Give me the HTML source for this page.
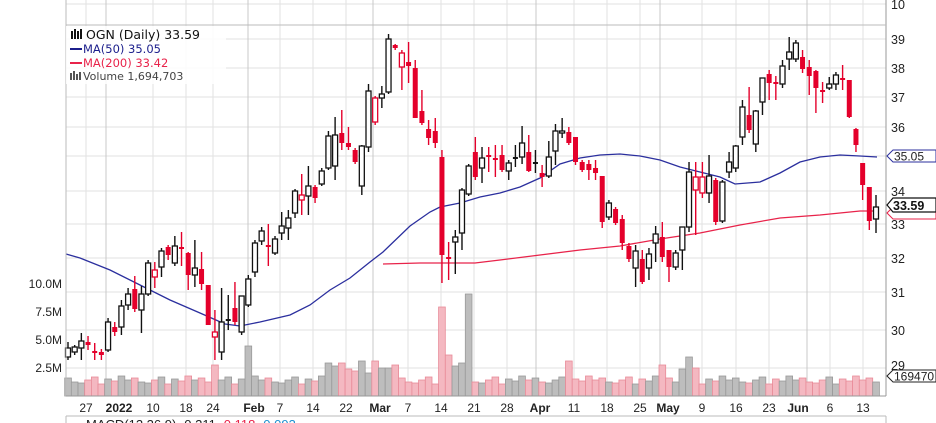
<!DOCTYPE html>
<html><head><meta charset="utf-8"><style>
body{margin:0;background:#fff;width:936px;height:423px;overflow:hidden;font-family:"Liberation Sans",Arial,sans-serif}
svg{position:absolute;left:0;top:0}
</style></head><body>
<svg id="s" width="936" height="423" xmlns="http://www.w3.org/2000/svg" font-family="Liberation Sans, Arial, sans-serif">
<g id="grid"></g>
<g id="vol"></g>
<polyline fill="none" stroke="#2b2f9e" stroke-width="1.3" points="66,254 80,258 110,270 140,285 170,300 200,313 225,324 240,326 260,322 290,315 310,305 330,290 350,278 370,262 383,252 410,226 430,212 440,207 460,203 480,197 500,193 520,187 540,178 560,164 580,158 600,155 620,154 640,156 660,160 680,167 700,172 720,177 735,184 760,182 780,173 800,162 820,157 840,155 860,156 877,157"/>
<polyline fill="none" stroke="#e8234a" stroke-width="1.3" points="383,264 420,263 440,263 475,263 500,260 540,255 580,250 620,246 660,239 700,233 740,225 780,218 820,215 860,211 877,211"/>
<g id="c"></g>
<line x1="886" y1="0" x2="886" y2="396" stroke="#999"/>
<line x1="66" y1="25" x2="886" y2="25" stroke="#bbb"/>
<line x1="66" y1="0" x2="66" y2="396" stroke="#bbb"/>
<line x1="66" y1="396" x2="886" y2="396" stroke="#999"/>
<g font-size="12.5" fill="#222">
<text x="891" y="9">10</text>
<text x="891" y="44">39</text>
<text x="891" y="73">38</text>
<text x="891" y="102">37</text>
<text x="891" y="132">36</text>
<text x="891" y="196">34</text>
<text x="891" y="229">33</text>
<text x="891" y="263">32</text>
<text x="891" y="297">31</text>
<text x="891" y="335">30</text>
<text x="891" y="370">29</text>
</g>
<g font-size="12" fill="#222" text-anchor="end">
<text x="62" y="288">10.0M</text>
<text x="62" y="316">7.5M</text>
<text x="62" y="344">5.0M</text>
<text x="62" y="372">2.5M</text>
</g>
<path d="M887,156 L893,150 L936,150 L936,162 L893,162 Z" fill="#fff" stroke="#2b2f9e"/>
<text x="894" y="160.5" font-size="12" fill="#222">35.05</text>
<path d="M887,213 L893,207 L936,207 L936,219 L893,219 Z" fill="#fff" stroke="#e8234a"/>
<path d="M887,205 L893,198 L936,198 L936,212 L893,212 Z" fill="#fff" stroke="#111" stroke-width="1.2"/>
<text x="893" y="210" font-size="12.5" font-weight="bold" fill="#111">33.59</text>
<path d="M887,376 L893,370 L936,370 L936,382 L893,382 Z" fill="#fff" stroke="#222"/>
<text x="894" y="380.5" font-size="12" fill="#222">169470</text>
<g font-size="12" fill="#222" text-anchor="middle">
<text x="86" y="412">27</text>
<text x="119" y="412" font-weight="bold">2022</text>
<text x="153" y="412">10</text>
<text x="186" y="412">18</text>
<text x="213" y="412">24</text>
<text x="254" y="412" font-weight="bold">Feb</text>
<text x="280" y="412">7</text>
<text x="313" y="412">14</text>
<text x="346" y="412">22</text>
<text x="380" y="412" font-weight="bold">Mar</text>
<text x="408" y="412">7</text>
<text x="441" y="412">14</text>
<text x="474" y="412">21</text>
<text x="507" y="412">28</text>
<text x="540" y="412" font-weight="bold">Apr</text>
<text x="574" y="412">11</text>
<text x="607" y="412">18</text>
<text x="640" y="412">25</text>
<text x="668" y="412" font-weight="bold">May</text>
<text x="702" y="412">9</text>
<text x="736" y="412">16</text>
<text x="769" y="412">23</text>
<text x="798" y="412" font-weight="bold">Jun</text>
<text x="830" y="412">6</text>
<text x="863" y="412">13</text>
</g>
<line x1="66" y1="416" x2="886" y2="416" stroke="#bbb"/>
<line x1="66" y1="416" x2="66" y2="423" stroke="#bbb"/>
<line x1="886" y1="416" x2="886" y2="423" stroke="#bbb"/>
<text x="86" y="429" font-size="13" fill="#222">MACD(12,26,9) -0.211 <tspan fill="#e8234a">-0.118</tspan> <tspan fill="#1e90d0">-0.093</tspan></text>
<rect x="66" y="26" width="160" height="58" fill="#fff" opacity="0.85"/>
<g font-family="DejaVu Sans, Verdana, sans-serif">
<rect x="71" y="31" width="2" height="8" fill="#111"/><rect x="74" y="29" width="2" height="10" fill="#111"/><rect x="77" y="31" width="2" height="8" fill="#111"/><rect x="80" y="29" width="2" height="10" fill="#111"/>
<text x="86" y="39" fill="#111" font-size="12.5">OGN (Daily) 33.59</text>
<line x1="70" y1="49" x2="82" y2="49" stroke="#1c1f8c" stroke-width="2"/>
<text x="83" y="53" fill="#1c1f8c" font-size="11.5">MA(50) 35.05</text>
<line x1="70" y1="63" x2="82" y2="63" stroke="#e8234a" stroke-width="2"/>
<text x="83" y="67" fill="#e8234a" font-size="11.5">MA(200) 33.42</text>
<rect x="70" y="73" width="2" height="7" fill="#555"/><rect x="73" y="71" width="2" height="9" fill="#555"/><rect x="76" y="74" width="2" height="6" fill="#555"/><rect x="79" y="72" width="2" height="8" fill="#555"/>
<text x="83" y="80" fill="#444" font-size="11">Volume 1,694,703</text>
</g>
</svg>
<script>
var NS="http://www.w3.org/2000/svg";
function el(p,t,a){var e=document.createElementNS(NS,t);for(var k in a)e.setAttribute(k,a[k]);p.appendChild(e);return e;}
var g=document.getElementById('grid');
[4,39,68,97,127,156,191,224,258,292,330,368].forEach(function(y){el(g,'line',{x1:66,y1:y,x2:886,y2:y,stroke:'#e2e2e2'});});
[86,153,186,213,280,313,346,408,441,474,507,574,607,640,702,736,769,830,863].forEach(function(x){el(g,'line',{x1:x,y1:0,x2:x,y2:396,stroke:'#e2e2e2'});});
[106,248,373,536,660,807].forEach(function(x){el(g,'line',{x1:x,y1:0,x2:x,y2:396,stroke:'#c8c8c8'});});
var C=[
[348,357,342,360,'h'],[347,352,345,355,'h'],[341,348,333,360,'h'],[342,345,336,350,'r'],[351,353,343,360,'r'],[352,355,349,360,'r'],
[322,350,318,352,'h'],[327,332,322,336,'r'],[306,327,300,335,'h'],[294,305,288,310,'h'],[289,309,276,312,'r'],[294,310,286,333,'h'],
[263,294,260,296,'h'],[270,277,262,288,'rh'],[251,267,248,277,'h'],[247,255,245,260,'r'],[246,263,236,266,'h'],[247,248,232,266,'r'],
[253,275,252,290,'r'],[268,275,240,287,'h'],[269,284,252,290,'r'],[285,325,285,325,'r'],[332,337,310,360,'rh'],[322,352,288,360,'h'],
[319,321,295,330,'d'],[308,322,282,325,'r'],[296,332,315,335,'h'],[279,305,275,307,'h'],[243,272,240,277,'h'],[231,241,227,245,'h'],
[245,247,224,266,'r'],[239,253,236,255,'h'],[226,233,212,240,'h'],[218,228,210,240,'h'],[191,213,189,218,'h'],[195,200,174,215,'rh'],
[186,196,166,215,'h'],[187,198,185,203,'r'],[171,184,168,186,'h'],[136,168,131,170,'h'],[135,166,117,180,'h'],[133,143,110,150,'r'],
[143,147,127,150,'r'],[150,162,148,164,'r'],[146,186,145,195,'h'],[91,147,84,152,'h'],[98,122,96,125,'rh'],[94,98,86,108,'h'],
[39,92,34,94,'h'],[45,48,44,50,'r'],[53,67,50,90,'rh'],[62,66,42,83,'r'],[68,118,60,118,'r'],[111,123,90,125,'r'],
[129,138,120,145,'r'],[131,143,118,148,'r'],[157,255,150,283,'r'],[257,259,242,280,'r'],[237,242,230,274,'h'],[190,233,188,250,'h'],
[166,194,164,196,'h'],[152,177,137,180,'r'],[158,168,147,183,'h'],[155,157,147,172,'r'],[158,160,145,177,'r'],[155,170,145,172,'r'],
[163,171,160,180,'h'],[157,159,145,167,'d'],[143,157,126,164,'h'],[152,171,135,172,'r'],[162,164,150,173,'d'],[173,177,165,187,'r'],
[157,176,141,178,'h'],[131,151,124,165,'h'],[131,133,118,138,'h'],[132,143,127,145,'r'],[137,162,137,165,'r'],[162,170,160,172,'r'],
[164,170,160,180,'r'],[168,173,160,180,'r'],[176,222,176,228,'r'],[203,217,200,220,'h'],[209,223,207,225,'r'],[219,243,215,250,'r'],
[246,259,243,262,'r'],[251,268,245,287,'h'],[259,282,250,284,'r'],[254,268,248,280,'h'],[234,243,226,262,'h'],[237,257,222,262,'r'],
[250,267,250,282,'r'],[253,267,250,270,'h'],[227,250,227,270,'h'],[172,227,162,232,'h'],[177,190,162,235,'rh'],[177,193,162,198,'rh'],
[176,193,155,203,'h'],[180,222,178,225,'r'],[182,221,180,223,'h'],[162,172,152,178,'h'],[146,168,145,172,'h'],[107,137,100,145,'h'],
[115,130,87,133,'r'],[111,144,110,152,'h'],[78,102,78,115,'h'],[74,83,70,100,'r'],[82,84,76,100,'r'],[66,84,60,88,'h'],
[52,59,37,70,'h'],[43,59,40,62,'h'],[57,69,50,73,'r'],[67,76,60,95,'r'],[71,88,70,113,'r'],[90,92,82,103,'r'],
[84,88,77,90,'h'],[75,84,72,90,'h'],[78,80,65,90,'r'],[80,117,80,118,'r'],[129,145,128,152,'r'],[163,185,163,200,'r'],
[187,221,187,230,'r'],[207,219,195,233,'h']];
var n=C.length,x0=68,x1=876,dx=(x1-x0)/(n-1);
var cg=document.getElementById('c'),vg=document.getElementById('vol');
function vt(i,x){
 var base=[378,382,383,380,377,384,379,381,376,380][i%10];
 if(Math.abs(x-216)<4)return 365; if(Math.abs(x-247)<4)return 346;
 if(Math.abs(x-440)<4)return 307; if(Math.abs(x-448)<4)return 355; if(Math.abs(x-468)<4)return 294;
 if(Math.abs(x-462)<4)return 363; if(Math.abs(x-455)<4)return 366;
 if(x>325&&x<400)return base-8-((i*7)%12);
 if(Math.abs(x-688)<4)return 357; if(Math.abs(x-682)<4)return 369; if(Math.abs(x-695)<4)return 368;
 if(Math.abs(x-568)<4)return 361; if(Math.abs(x-662)<4)return 365;
 return base;
}
C.forEach(function(c,i){
 var x=x0+i*dx, red=c[4][0]=='r';
 var t=vt(i,x);
 el(vg,'rect',{x:(x-dx/2).toFixed(1),y:t,width:dx.toFixed(1),height:396-t,fill:red?'#f4b8c1':'#bdbdbd',stroke:red?'#e88a98':'#999','stroke-width':0.8});
 var col=red?'#e4002b':'#111';
 el(cg,'line',{x1:x,y1:c[2],x2:x,y2:c[3],stroke:col,'stroke-width':1.4});
 var h=Math.max(c[1]-c[0],2);
 if(c[4]=='r') el(cg,'rect',{x:x-2.5,y:c[0],width:5,height:h,fill:col});
 else if(c[4]=='d') el(cg,'rect',{x:x-2.5,y:c[0],width:5,height:2,fill:'#111'});
 else el(cg,'rect',{x:x-2.5,y:c[0],width:5,height:h,fill:'#fff',stroke:col,'stroke-width':1.3});
});
</script>
</body></html>
